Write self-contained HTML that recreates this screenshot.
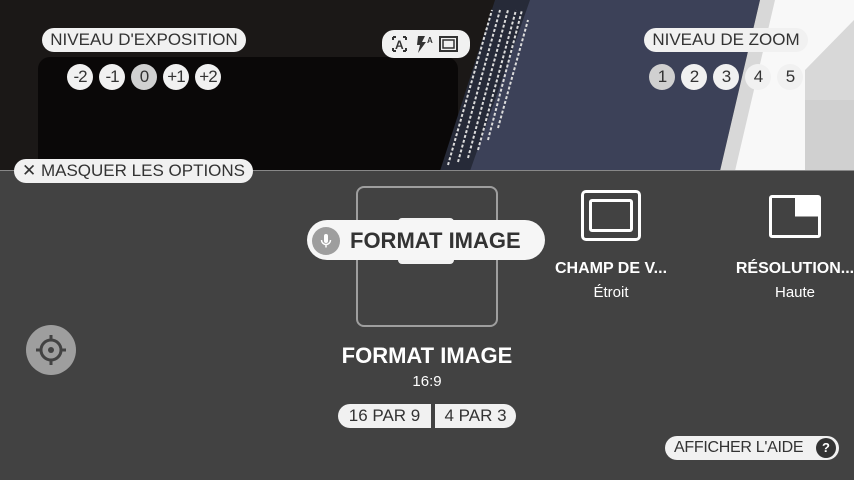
<!DOCTYPE html>
<html><head><meta charset="utf-8"><style>
*{margin:0;padding:0;box-sizing:border-box}
body{width:854px;height:480px;overflow:hidden;background:#424242;font-family:"Liberation Sans",sans-serif;position:relative}
.abs{position:absolute}
.pill{position:absolute;background:#f1f1f1;color:#333;border-radius:12px;font-size:17px;line-height:24px;padding:0 10px;white-space:nowrap}
.c{position:absolute;width:26px;height:26px;border-radius:13px;background:#f1f1f1;color:#333;font-size:17px;line-height:26px;text-align:center;letter-spacing:-1px}
.w{color:#fff;text-align:center;position:absolute}
</style></head><body>
<svg class="abs" style="left:0;top:0" width="854" height="171">
<rect width="854" height="171" fill="#1b1817"/>
<rect x="38" y="57" width="420" height="130" rx="12" fill="#0a0808"/>
<polygon points="450,171 505,0 760,0 720,171" fill="#3c4158"/>
<polygon points="440,171 495,0 530,0 470,171" fill="#262a38"/>
<g stroke="#dcdcdc" stroke-width="2" stroke-dasharray="3 2">
<line x1="448" y1="165" x2="492" y2="10"/><line x1="458" y1="162" x2="500" y2="10"/><line x1="468" y1="158" x2="508" y2="10"/><line x1="478" y1="150" x2="516" y2="10"/><line x1="488" y1="140" x2="522" y2="10"/><line x1="498" y1="128" x2="528" y2="20"/>
</g>
<polygon points="720,171 760,0 854,0 854,171" fill="#d8d8d8"/>
<polygon points="735,171 775,0 854,0 854,20 805,70 805,171" fill="#f8f8f8"/>
<rect x="805" y="100" width="49" height="71" fill="#d0d0d0"/>
<rect x="0" y="170" width="854" height="1" fill="#888"/>
</svg>
<div class="pill" style="left:42px;top:28px;width:204px;text-align:center;padding:0">NIVEAU D'EXPOSITION</div>
<div class="pill" style="left:382px;top:30px;width:88px;height:28px;padding:0"></div>
<svg class="abs" style="left:390px;top:33px" width="72" height="22">
<path d="M3 4h3M3 4v3M16 4h-3M16 4v3M3 18h3M3 18v-3M16 18h-3M16 18v-3" stroke="#333" stroke-width="2" fill="none"/>
<text x="5" y="16" font-size="12" font-weight="bold" fill="#333" font-family="Liberation Sans">A</text>
<path d="M28 3h7l-3 6h4l-8 11 2-8h-3z" fill="#333"/>
<text x="37" y="10" font-size="8" font-weight="bold" fill="#333">A</text>
<rect x="50" y="4" width="17" height="14" fill="none" stroke="#333" stroke-width="2"/><rect x="53" y="7" width="11" height="8" fill="none" stroke="#333" stroke-width="1.5"/>
</svg>
<div class="pill" style="left:644px;top:28px;width:164px;text-align:center;padding:0">NIVEAU DE ZOOM</div>
<div class="c" style="left:67px;top:64px">-2</div><div class="c" style="left:99px;top:64px">-1</div><div class="c" style="left:131px;top:64px;background:#d0d0d0">0</div><div class="c" style="left:163px;top:64px">+1</div><div class="c" style="left:195px;top:64px">+2</div>
<div class="c" style="left:649px;top:64px;background:#d0d0d0">1</div><div class="c" style="left:681px;top:64px">2</div><div class="c" style="left:713px;top:64px">3</div><div class="c" style="left:745px;top:64px">4</div><div class="c" style="left:777px;top:64px">5</div>
<div class="pill" style="left:14px;top:159px;height:24px;width:239px;padding:0 0 0 8px">✕ MASQUER LES OPTIONS</div>
<svg class="abs" style="left:26px;top:325px" width="50" height="50">
<circle cx="25" cy="25" r="25" fill="#9e9e9e"/>
<circle cx="25" cy="25" r="10" fill="none" stroke="#424242" stroke-width="3"/>
<circle cx="25" cy="25" r="3" fill="#424242"/>
<path d="M25 10v6M25 34v6M10 25h6M34 25h6" stroke="#424242" stroke-width="3"/>
</svg>
<div class="abs" style="left:356px;top:186px;width:142px;height:141px;border:2px solid #9e9e9e;border-radius:8px"></div>
<div class="abs" style="left:398px;top:218px;width:56px;height:46px;background:#f1f1f1;border-radius:4px"></div>
<div class="abs" style="left:307px;top:220px;width:238px;height:40px;background:#f6f6f6;border-radius:20px"></div>
<svg class="abs" style="left:312px;top:227px" width="28" height="28"><circle cx="14" cy="14" r="14" fill="#9e9e9e"/><rect x="12" y="7" width="4" height="9" rx="2" fill="#fff"/><path d="M9.5 13a4.5 4.5 0 0 0 9 0M14 17.5v3" stroke="#fff" stroke-width="1.5" fill="none"/></svg>
<div class="abs" style="left:350px;top:227px;font-size:22px;font-weight:bold;color:#333;line-height:28px">FORMAT IMAGE</div>
<div class="abs" style="left:581px;top:190px;width:60px;height:51px;border:3px solid #fff;border-radius:5px"></div>
<div class="abs" style="left:589px;top:199px;width:44px;height:33px;border:3px solid #fff;border-radius:3px"></div>
<div class="w" style="left:540px;top:260px;width:142px;font-size:16px;font-weight:bold">CHAMP DE V...</div>
<div class="w" style="left:540px;top:284px;width:142px;font-size:15px">Étroit</div>
<div class="abs" style="left:769px;top:195px;width:52px;height:43px;border:3px solid #fff;border-radius:3px;background:linear-gradient(#fff,#fff) right top/50% 50% no-repeat"></div>
<div class="w" style="left:730px;top:260px;width:130px;font-size:16px;font-weight:bold">RÉSOLUTION...</div>
<div class="w" style="left:730px;top:284px;width:130px;font-size:15px">Haute</div>
<div class="w" style="left:320px;top:343px;width:214px;font-size:22px;font-weight:bold">FORMAT IMAGE</div>
<div class="w" style="left:320px;top:373px;width:214px;font-size:15px">16:9</div>
<div class="abs" style="left:338px;top:404px;width:93px;height:24px;background:#f1f1f1;border-radius:12px 0 0 12px;color:#333;font-size:17px;line-height:24px;text-align:center">16 PAR 9</div>
<div class="abs" style="left:435px;top:404px;width:81px;height:24px;background:#f1f1f1;border-radius:0 12px 12px 0;color:#333;font-size:17px;line-height:24px;text-align:center">4 PAR 3</div>
<div class="pill" style="left:665px;top:436px;width:174px;padding:0 0 0 9px;font-size:16px;letter-spacing:-0.3px">AFFICHER L'AIDE</div>
<div class="abs" style="left:816px;top:438px;width:20px;height:20px;border-radius:10px;background:#333;color:#fff;font-size:13px;font-weight:bold;line-height:20px;text-align:center">?</div>
</body></html>
